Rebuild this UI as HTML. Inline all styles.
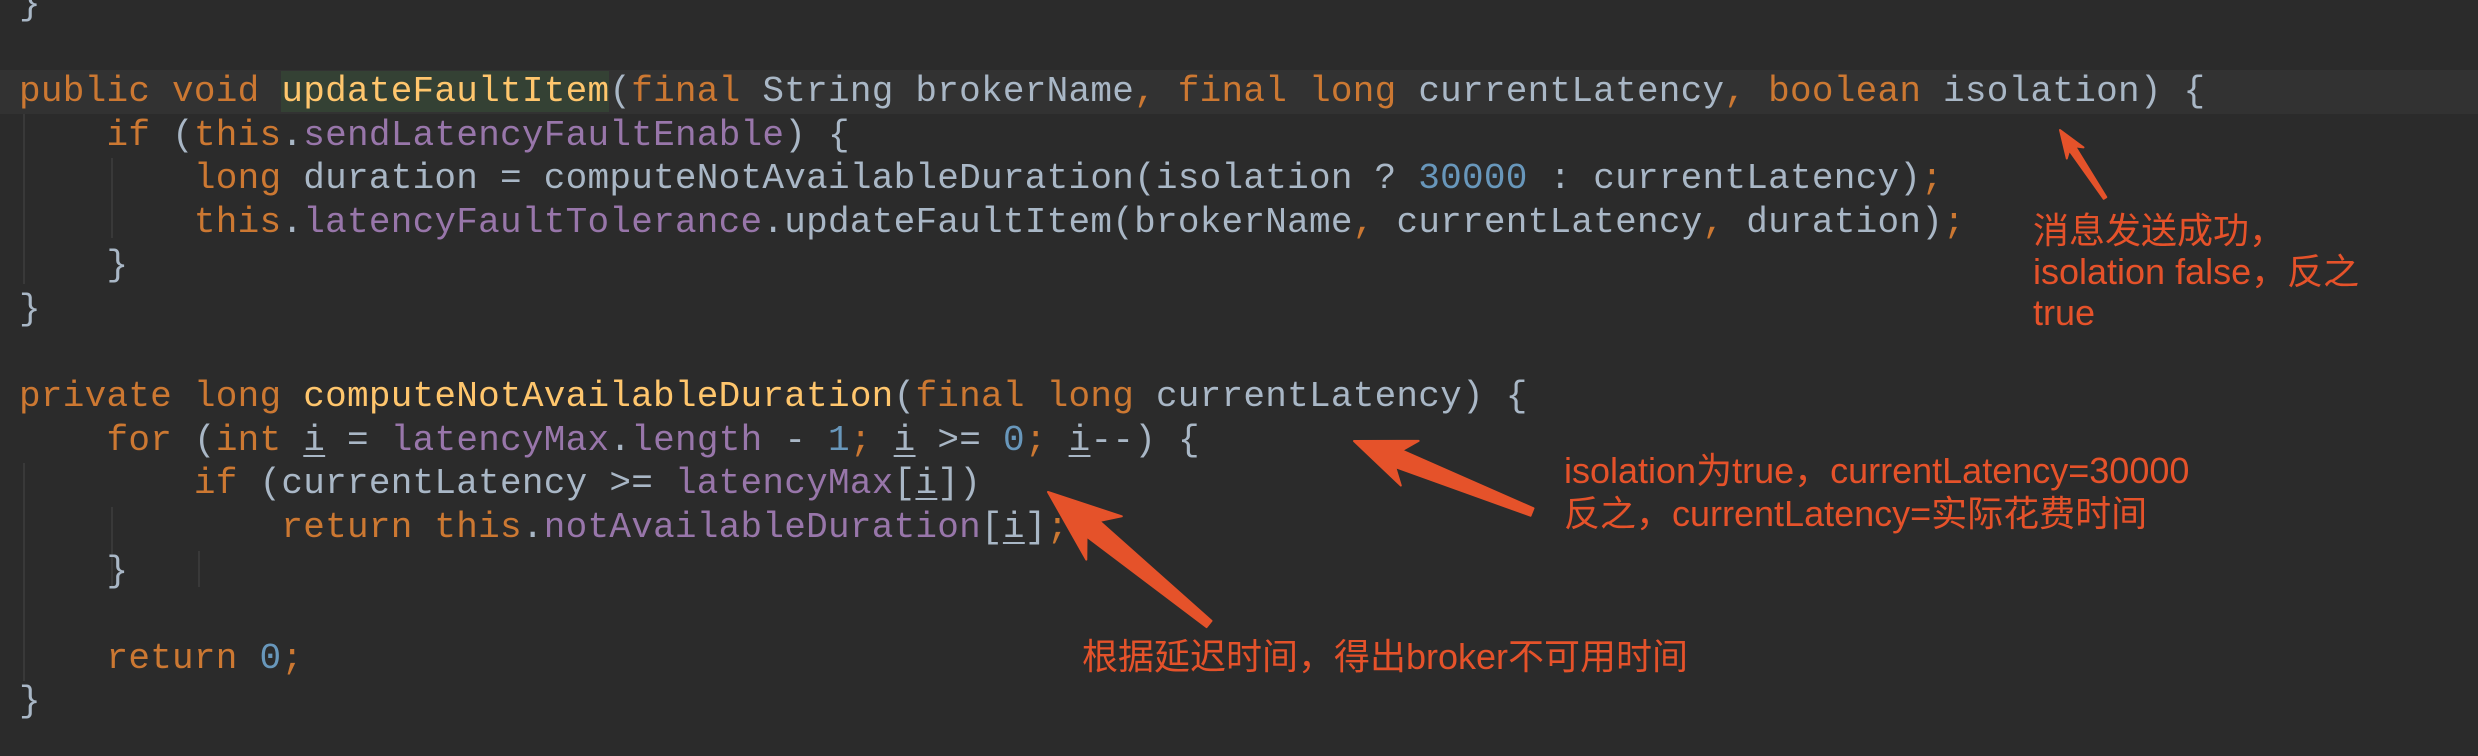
<!DOCTYPE html>
<html><head><meta charset="utf-8"><style>
html,body{margin:0;padding:0;}
body{width:2478px;height:756px;background:#2b2b2b;position:relative;overflow:hidden;}
.hl{position:absolute;left:0;top:70px;width:2478px;height:43.6px;background:#323232;}
.code{position:absolute;left:19px;top:-17.2px;font-family:"Liberation Mono",monospace;font-size:36px;letter-spacing:0.26px;line-height:43.6px;color:#a9b7c6;white-space:pre;}
.k{color:#cc7832}.f{color:#ffc66d}.p{color:#9876aa}.n{color:#6897bb}
.fh{background:#344134}
.u{text-decoration:underline;text-underline-offset:5px;text-decoration-thickness:2px}
.g{position:absolute;width:2px;background:#393939}
.a{position:absolute;font-family:"Liberation Sans","Noto Sans CJK SC",sans-serif;color:#e5522a;font-size:36px;white-space:pre;}
svg{position:absolute;left:0;top:0}
</style></head><body>
<div class="hl"></div>
<div class="g" style="left:23px;top:114px;height:170px"></div>
<div class="g" style="left:111px;top:158px;height:80px"></div>
<div class="g" style="left:23px;top:463px;height:218px"></div>
<div class="g" style="left:111px;top:507px;height:80px"></div>
<div class="g" style="left:198px;top:551px;height:36px"></div>
<div class="code">}

<span class="k">public void </span><span class="f fh">updateFaultItem</span>(<span class="k">final </span>String brokerName<span class="k">, final long </span>currentLatency<span class="k">, boolean </span>isolation) {
    <span class="k">if </span>(<span class="k">this</span>.<span class="p">sendLatencyFaultEnable</span>) {
        <span class="k">long </span>duration = computeNotAvailableDuration(isolation ? <span class="n">30000</span> : currentLatency)<span class="k">;</span>
        <span class="k">this</span>.<span class="p">latencyFaultTolerance</span>.updateFaultItem(brokerName<span class="k">, </span>currentLatency<span class="k">, </span>duration)<span class="k">;</span>
    }
}

<span class="k">private long </span><span class="f">computeNotAvailableDuration</span>(<span class="k">final long </span>currentLatency) {
    <span class="k">for </span>(<span class="k">int </span><span class="u">i</span> = <span class="p">latencyMax</span>.<span class="p">length</span> - <span class="n">1</span><span class="k">; </span><span class="u">i</span> &gt;= <span class="n">0</span><span class="k">; </span><span class="u">i</span>--) {
        <span class="k">if </span>(currentLatency &gt;= <span class="p">latencyMax</span>[<span class="u">i</span>])
            <span class="k">return this</span>.<span class="p">notAvailableDuration</span>[<span class="u">i</span>]<span class="k">;</span>
    }

    <span class="k">return </span><span class="n">0</span><span class="k">;</span>
}</div>
<div class="a" style="left:2033px;top:210px;line-height:41px">消息发送成功，
isolation false，反之
true</div>
<div class="a" style="left:1564px;top:449px;line-height:43px">isolation为true，currentLatency=30000
反之，currentLatency=实际花费时间</div>
<div class="a" style="left:1082px;top:636px;line-height:42px">根据延迟时间，得出broker不可用时间</div>
<svg width="2478" height="756" id="s"></svg>
<script>
function arrow(tx,ty,hx,hy,w0,w1,L,W){
 var dx=hx-tx,dy=hy-ty,len=Math.hypot(dx,dy),ux=dx/len,uy=dy/len,nx=-uy,ny=ux;
 var bx=hx-ux*L,by=hy-uy*L;
 var pts=[[tx+nx*w0,ty+ny*w0],[bx+nx*w1,by+ny*w1],[bx+nx*W-ux*L*0.25,by+ny*W-uy*L*0.25],[hx,hy],[bx-nx*W-ux*L*0.25,by-ny*W-uy*L*0.25],[bx-nx*w1,by-ny*w1],[tx-nx*w0,ty-ny*w0]];
 return '<polygon fill="#e5522a" stroke="#e5522a" stroke-linejoin="round" stroke-width="2" points="'+pts.map(function(p){return p[0].toFixed(1)+','+p[1].toFixed(1)}).join(' ')+'"/>';
}
document.getElementById('s').innerHTML=
 arrow(2105,198,2060,130,1.5,3.5,22,10)+
 arrow(1532,512,1354,441,4,9,48,24)+
 arrow(1209,624,1048,492,4,10,58,28);
</script>
</body></html>
